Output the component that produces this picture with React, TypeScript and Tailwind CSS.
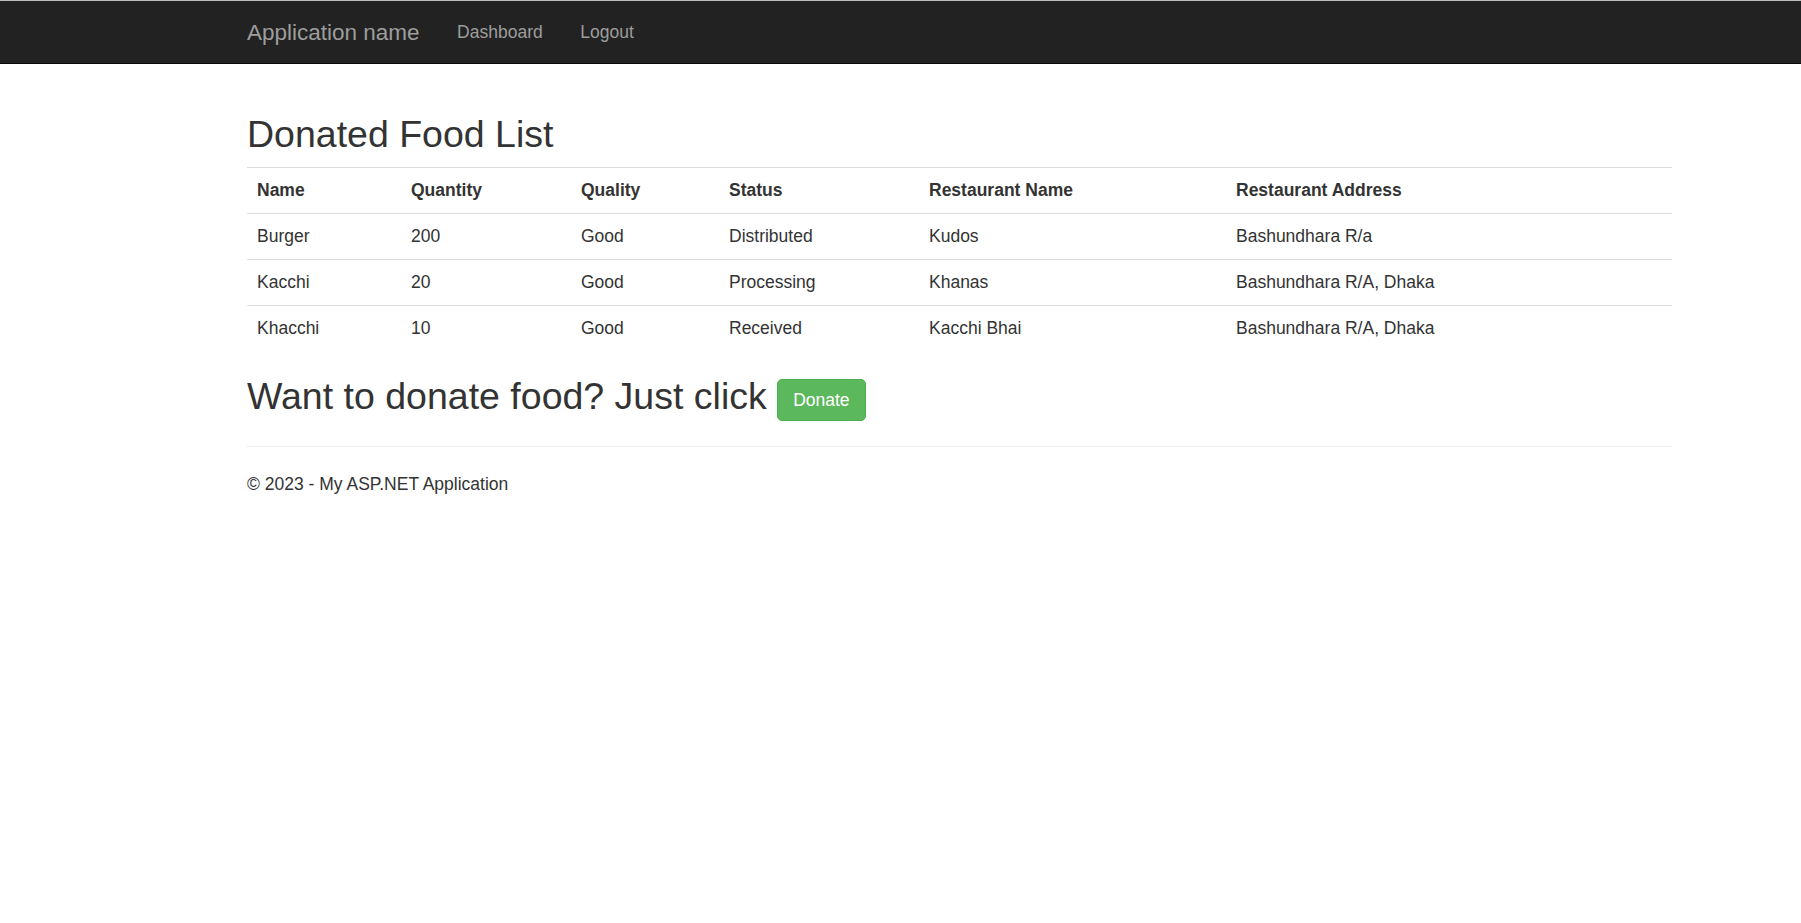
const DONATIONS = [
	{ name: "Burger", quantity: 200, quality: "Good", status: "Distributed", restaurant: "Kudos", address: "Bashundhara R/a" },
	{ name: "Kacchi", quantity: 20, quality: "Good", status: "Processing", restaurant: "Khanas", address: "Bashundhara R/A, Dhaka" },
	{ name: "Khacchi", quantity: 10, quality: "Good", status: "Received", restaurant: "Kacchi Bhai", address: "Bashundhara R/A, Dhaka" },
];

const HEADERS = ["Name", "Quantity", "Quality", "Status", "Restaurant Name", "Restaurant Address"];

const App = () => {
	return (
		<div className="min-h-screen bg-white text-[#333] font-['Liberation_Sans',Arial,sans-serif] text-[17.5px] leading-[25px]">
			<nav className="h-[64px] bg-[#222] border-t border-t-[#bdbdbd] border-b border-b-[#080808]">
				<div className="ml-[247px] w-[1425px] h-full flex items-center">
					<a className="text-[22.5px] leading-[25px] text-[#9d9d9d] pr-[18.75px]">Application name</a>
					<a className="px-[18.75px] text-[#9d9d9d]">Dashboard</a>
					<a className="px-[18.75px] text-[#9d9d9d]">Logout</a>
				</div>
			</nav>

			<div className="ml-[247px] w-[1425px]">
				<h2 className="mt-[50px] mb-[12px] text-[37.5px] leading-[41px] font-normal">Donated Food List</h2>

				<table className="w-full table-fixed border-collapse">
					<colgroup>
						<col className="w-[154px]" />
						<col className="w-[170px]" />
						<col className="w-[148px]" />
						<col className="w-[200px]" />
						<col className="w-[307px]" />
						<col className="w-[446px]" />
					</colgroup>
					<tbody>
						<tr>
							{HEADERS.map((h) => (
								<th key={h} className="border-t border-[#ddd] p-[10px] text-left font-bold">
									{h}
								</th>
							))}
						</tr>
						{DONATIONS.map((d) => (
							<tr key={d.name}>
								<td className="border-t border-[#ddd] p-[10px]">{d.name}</td>
								<td className="border-t border-[#ddd] p-[10px]">{d.quantity}</td>
								<td className="border-t border-[#ddd] p-[10px]">{d.quality}</td>
								<td className="border-t border-[#ddd] p-[10px]">{d.status}</td>
								<td className="border-t border-[#ddd] p-[10px]">{d.restaurant}</td>
								<td className="border-t border-[#ddd] p-[10px]">{d.address}</td>
							</tr>
						))}
					</tbody>
				</table>

				<h2 className="mt-[25px] text-[37.5px] leading-[41px] font-normal">
					Want to donate food? Just click{" "}
					<a className="inline-block align-middle h-[42px] px-[15px] text-[17.5px] leading-[25px] py-[7.5px] text-white bg-[#5cb85c] border border-[#4cae4c] rounded-[5px] relative top-[1px]">
						Donate
					</a>
				</h2>

				<hr className="mt-[26px] mb-[25px] border-t border-[#eee]" />

				<footer>
					<p>© 2023 - My ASP.NET Application</p>
				</footer>
			</div>
		</div>
	);
};

export default App;
